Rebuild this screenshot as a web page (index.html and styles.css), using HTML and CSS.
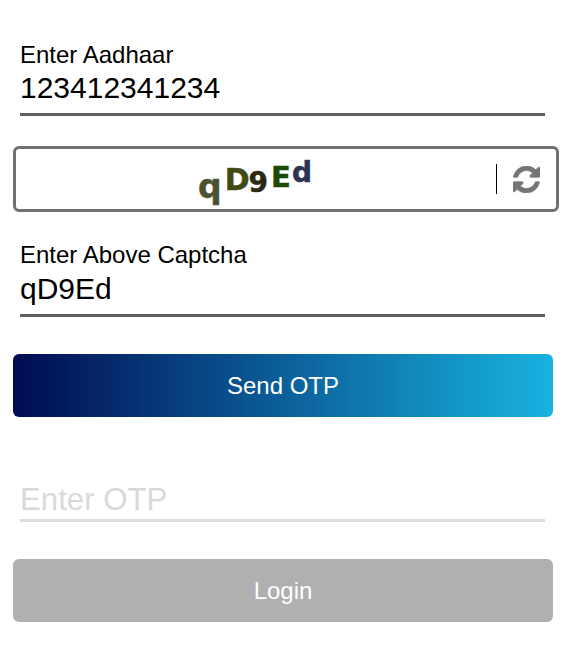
FILE: index.html
```html
<!DOCTYPE html>
<html lang="en">
<head>
<meta charset="utf-8">
<title>Login</title>
<link rel="stylesheet" href="styles.css">
</head>
<body>
<main class="form">
  <div class="field">
    <div class="label">Enter Aadhaar</div>
    <div class="value">123412341234</div>
  </div>
  <div class="captcha">
    <div class="captcha-image">
      <span class="ch ch-q">q</span><span class="ch ch-D">D</span><span class="ch ch-9">9</span><span class="ch ch-E">E</span><span class="ch ch-d">d</span>
    </div>
    <div class="refresh">
      <svg class="refresh-icon" viewBox="0 0 1536 1536" aria-hidden="true"><path d="M1511 928q0 5-1 7-64 268-268 434.500t-478 166.500q-146 0-282.500-55t-243.500-157l-129 129q-19 19-45 19t-45-19-19-45v-448q0-26 19-45t45-19h448q26 0 45 19t19 45-19 45l-137 137q71 66 161 102t187 36q134 0 250-65t186-179q11-17 53-117 8-23 30-23h192q13 0 22.500 9.500t9.500 22.500zM1536 128v448q0 26-19 45t-45 19h-448q-26 0-45-19t-19-45 19-45l138-138q-148-137-349-137-134 0-250 65t-186 179q-11 17-53 117-8 23-30 23h-199q-13 0-22.500-9.500t-9.500-22.500v-7q65-268 270-434.500t480-166.500q146 0 284 55.500t245 156.500l130-129q19-19 45-19t45 19 19 45z"/></svg>
    </div>
  </div>
  <div class="field field-second">
    <div class="label">Enter Above Captcha</div>
    <div class="value">qD9Ed</div>
  </div>
  <button class="btn btn-send" type="button">Send OTP</button>
  <div class="field field-otp">
    <div class="value placeholder">Enter OTP</div>
  </div>
  <button class="btn btn-login" type="button">Login</button>
</main>
</body>
</html>
```
FILE: styles.css
```css
* { box-sizing: border-box; }
html, body { margin: 0; background: #fff; }
body {
  font-family: "Liberation Sans", Arial, sans-serif;
  color: #000;
}
.form {
  width: 546px;
  margin-left: 13px;
  padding-top: 42px;
}
.field {
  width: 525px;
  margin-left: 7px;
  border-bottom: 3px solid #5f5f5f;
}
.label {
  font-size: 24px;
  line-height: 26px;
}
.value {
  font-size: 30px;
  line-height: 34px;
  height: 45px;
  padding-top: 3px;
}
.captcha {
  display: flex;
  align-items: center;
  height: 66px;
  margin-top: 30px;
  border: 3px solid #707070;
  border-radius: 6px;
  background: #fff;
}
.captcha-image {
  flex: 1;
  height: 100%;
  display: flex;
  justify-content: center;
  align-items: center;
  padding-right: 2px;
  font-family: "DejaVu Sans", sans-serif;
  font-weight: 700;
  line-height: 1;
  -webkit-text-stroke: 0.5px currentColor;
}
.ch { display: inline-block; }
.ch-q { font-size: 33px; color: #4d5330; transform: translateY(7px); }
.ch-D { font-size: 30px; color: #414a14; transform: translateY(1px); margin-left: 3px; }
.ch-9 { font-size: 28px; color: #2b2a10; transform: translateY(4px); margin-left: -1px; }
.ch-E { font-size: 29px; color: #1c4a08; transform: translateY(-2px); margin-left: 3px; }
.ch-d { font-size: 28px; color: #2b3350; transform: translateY(-6px); margin-left: 1px; }
.refresh {
  width: 60px;
  height: 30px;
  border-left: 1px solid #000;
  display: flex;
  justify-content: center;
  align-items: center;
}
.refresh-icon {
  width: 27px;
  height: 27px;
  fill: #757575;
  stroke: #757575;
  stroke-width: 40;
}
.btn {
  display: block;
  width: 540px;
  height: 63px;
  border: 0;
  border-radius: 6px;
  color: #fff;
  font-family: inherit;
  font-size: 24px;
  text-align: center;
  padding: 0;
}
.btn-send {
  margin-top: 37px;
  background: linear-gradient(90deg, #000b52 0%, #17b3e0 100%);
}
.btn-login {
  margin-top: 37px;
  background: #b0b0b0;
}
.field-second { margin-top: 30px; }
.field-second .value {
  height: 46px;
  padding-top: 4px;
}
.field-otp {
  margin-top: 62px;
  border-bottom-color: #dcdcdc;
}
.placeholder {
  color: #dcd8d8;
  font-size: 31.2px;
  height: 40px;
  line-height: 40px;
  padding-top: 1px;
}
```
